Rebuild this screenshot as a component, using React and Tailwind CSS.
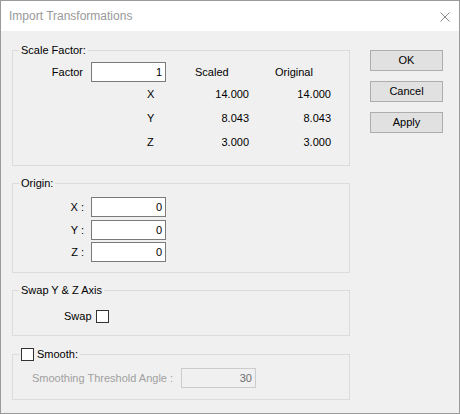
import React from 'react';

const font = { fontFamily: '"Liberation Sans", Arial, sans-serif' };

const TextBox = ({ value, disabled }) => (
  <div
    className={
      'w-[75px] h-[20px] border flex items-center justify-end pr-[3px] ' +
      (disabled ? 'border-[#cccccc] bg-[#f0f0f0] text-[#6d6d6d]' : 'border-[#7a7a7a] bg-white text-black')
    }
  >
    {value}
  </div>
);

const CheckBox = () => <div className="w-[13px] h-[13px] border border-[#333333] bg-white shrink-0" />;

const Button = ({ children }) => (
  <button className="w-[73px] h-[21px] bg-[#e1e1e1] border border-[#adadad] text-black flex items-center justify-center">
    {children}
  </button>
);

const Group = ({ legend, className = '', children }) => (
  <fieldset className={'border border-[#dcdcdc] ' + className}>
    <legend className="ml-[6px] px-[2px] leading-[15px] h-[15px]">{legend}</legend>
    {children}
  </fieldset>
);

export default function App() {
  const rows = [
    ['X', '14.000', '14.000'],
    ['Y', '8.043', '8.043'],
    ['Z', '3.000', '3.000'],
  ];

  return (
    <div
      className="w-[460px] h-[414px] border border-[#9a9a9a] bg-[#f0f0f0] flex flex-col text-[11px] text-black overflow-hidden"
      style={font}
    >
      <div className="h-[30px] bg-white flex items-center justify-between pl-[8px] pr-[9px] shrink-0">
        <span className="text-[12px] text-[#999999]">Import Transformations</span>
        <svg width="10" height="10" viewBox="0 0 10 10" className="mt-[1px]">
          <path d="M0.5 0.5 L9.5 9.5 M9.5 0.5 L0.5 9.5" stroke="#8a8a8a" strokeWidth="1" />
        </svg>
      </div>

      <div className="flex pl-[11px]">
        <div className="w-[338px] flex flex-col pt-[12px]">
          <Group legend="Scale Factor:" className="pb-[11px]">
            <div className="grid grid-cols-[78px_75px_83px_82px] mt-[4px]">
              <div className="h-[20px] flex items-center justify-end pr-[8px]">Factor</div>
              <TextBox value="1" />
              <div className="h-[20px] flex items-center pl-[29px]">Scaled</div>
              <div className="h-[20px] flex items-center pl-[26px]">Original</div>
              {rows.map(([axis, scaled, original]) => (
                <React.Fragment key={axis}>
                  <div className="h-[24px]" />
                  <div className="h-[24px] flex items-center pl-[56px]">{axis}</div>
                  <div className="h-[24px] flex items-center justify-end">{scaled}</div>
                  <div className="h-[24px] flex items-center justify-end">{original}</div>
                </React.Fragment>
              ))}
            </div>
          </Group>

          <Group legend="Origin:" className="mt-[10px] pb-[10px]">
            <div className="flex flex-col mt-[6px]">
              {[
                ['X :', 'mt-0'],
                ['Y :', 'mt-[3px]'],
                ['Z :', 'mt-[2px]'],
              ].map(([label, mt]) => (
                <div key={label} className={'flex items-center ' + mt}>
                  <div className="w-[71px] text-right">{label}</div>
                  <div className="ml-[7px]">
                    <TextBox value="0" />
                  </div>
                </div>
              ))}
            </div>
          </Group>

          <Group legend="Swap Y & Z Axis" className="mt-[10px] pb-[12px]">
            <div className="flex items-center mt-[12px] h-[13px] pl-[51px] gap-[4px]">
              <span>Swap</span>
              <CheckBox />
            </div>
          </Group>

          <fieldset className="border border-[#dcdcdc] mt-[11px] pb-[11px]">
            <legend className="ml-[6px] px-[2px] h-[15px] flex items-center gap-[3px]">
              <CheckBox />
              <span className="leading-[15px]">Smooth:</span>
            </legend>
            <div className="flex items-center mt-[6px] pl-[19px]">
              <span className="w-[149px] text-[#a0a0a0]">Smoothing Threshold Angle :</span>
              <TextBox value="30" disabled />
            </div>
          </fieldset>
        </div>

        <div className="ml-[20px] pt-[19px] flex flex-col gap-[10px]">
          <Button>OK</Button>
          <Button>Cancel</Button>
          <Button>Apply</Button>
        </div>
      </div>
    </div>
  );
}
